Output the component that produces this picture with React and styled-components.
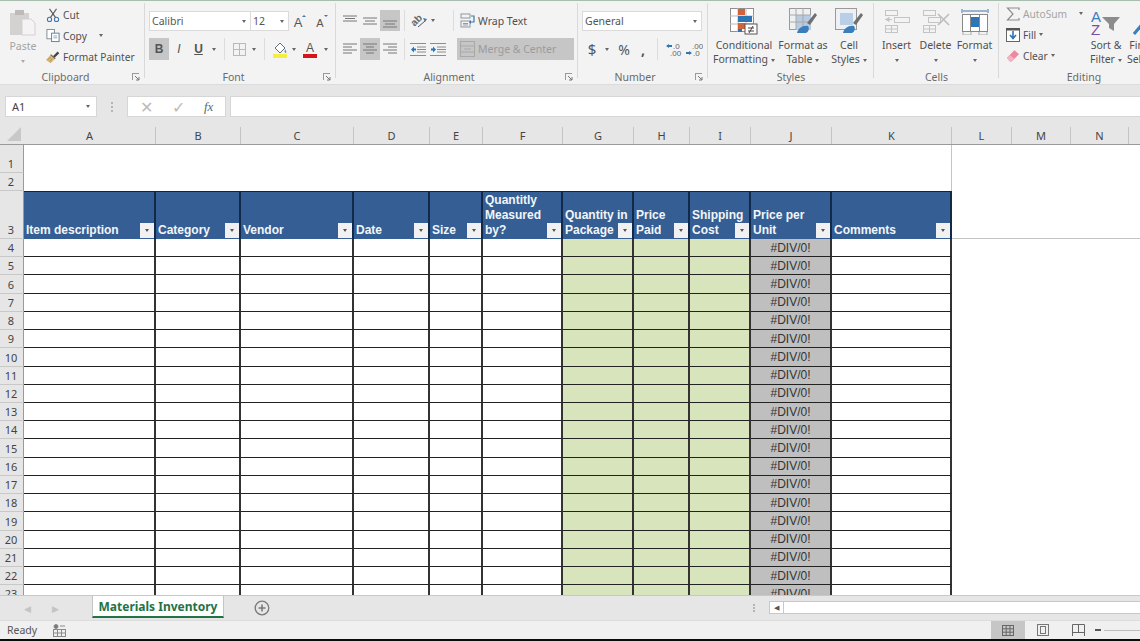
import React from 'react';
import styled, { createGlobalStyle } from 'styled-components';

const GlobalStyle = createGlobalStyle`
    html, body {
        margin: 0;
        padding: 0;
        background: #000;
    }
    * {
        box-sizing: border-box;
    }
`;

const UI_FONT = '"Noto Sans", "Open Sans", sans-serif';
const CELL_FONT = '"Liberation Sans", Arial, sans-serif';
const COLS = '24px 132px 85px 113px 76px 53px 80px 71px 56px 61px 81px 120px 60px 59px 58px 1fr';

const Page = styled.div`
    width: 1140px;
    height: 641px;
    display: flex;
    flex-direction: column;
    overflow: hidden;
    background: #e6e6e6;
    font-family: ${UI_FONT};
    color: #444;
`;

/* ribbon */
const Ribbon = styled.div`
    height: 84px;
    flex: none;
    display: flex;
    padding-top: 2px;
    border-top: 1px solid #a8bcb0;
    background: #f3f3f3;
    font-size: 10.5px;
`;

const Group = styled.div`
    flex: none;
    width: ${p => p.$w}px;
    display: flex;
    flex-direction: column;
    position: relative;
    background: linear-gradient(#d9d9d9, #d9d9d9) right top / 1px 75px no-repeat;
`;

const GroupBody = styled.div`
    height: 67px;
    display: flex;
    flex-direction: ${p => (p.$stack ? 'column' : 'row')};
    gap: ${p => (p.$stack ? 7 : 0)}px;
    padding: ${p => p.$top ?? 0}px 0 0 ${p => p.$left ?? 0}px;
`;

const GroupLabel = styled.div`
    height: 14px;
    line-height: 14px;
    padding-right: ${p => p.$pad ?? 0}px;
    text-align: center;
    color: #6a6a6a;
    font-size: 10.5px;
`;

const Launcher = styled.svg`
    position: absolute;
    right: 5px;
    top: 70px;
    width: 8px;
    height: 8px;
`;

const ToolRow = styled.div`
    display: flex;
    align-items: center;
    flex: none;
    height: ${p => p.$h ?? 22}px;
`;

const Btn = styled.div`
    flex: none;
    width: ${p => p.$w}px;
    height: 100%;
    display: flex;
    align-items: center;
    justify-content: center;
    background: ${p => (p.$on ? '#c6c6c6' : 'transparent')};
`;

const Spacer = styled.div`
    flex: none;
    width: ${p => p.$w}px;
`;

const Sep = styled.div`
    flex: none;
    width: ${p => p.$w}px;
    height: 100%;
    background: linear-gradient(#dcdcdc, #dcdcdc) center / 1px 100% no-repeat;
`;

const Caret = styled.span`
    display: inline-block;
    flex: none;
    width: 0;
    height: 0;
    border-left: 2.5px solid transparent;
    border-right: 2.5px solid transparent;
    border-top: 3px solid ${p => p.$c ?? '#666'};
    margin-left: ${p => p.$ml ?? 0}px;
    vertical-align: middle;
`;

const Combo = styled.div`
    flex: none;
    width: ${p => p.$w}px;
    height: 20px;
    display: flex;
    align-items: center;
    justify-content: space-between;
    padding: 0 4px 0 2px;
    background: #fff;
    border: 1px solid #dadada;
    margin-right: ${p => p.$mr ?? 0}px;
    font-size: 10.5px;
    color: #555;
`;

const BigBtn = styled.div`
    flex: none;
    width: ${p => p.$w}px;
    display: flex;
    flex-direction: column;
    align-items: center;
    padding-top: 5px;
    line-height: 14px;
    text-align: center;
    white-space: nowrap;
    color: ${p => p.$c ?? '#505050'};
`;

const BigIcon = styled.div`
    height: 27px;
    margin-bottom: 3px;
    display: flex;
    align-items: center;
`;

const SmallCol = styled.div`
    flex: none;
    width: ${p => p.$w}px;
    display: flex;
    flex-direction: column;
    font-size: 10.2px;
`;

const SmallRow = styled.div`
    height: 21px;
    display: flex;
    align-items: center;
    gap: 3px;
    white-space: nowrap;
    color: ${p => p.$c ?? '#505050'};
`;

const SmallIcon = styled.div`
    width: 14px;
    flex: none;
    display: flex;
    justify-content: center;
`;

const WrapBtn = styled.div`
    display: flex;
    align-items: center;
    gap: 2px;
    color: #505050;
`;

const MergeBtn = styled.div`
    flex: none;
    width: 117px;
    height: 22px;
    display: flex;
    align-items: center;
    gap: 3px;
    padding-left: 3px;
    background: #c6c6c6;
    color: #9b9b9b;
`;

const NumGlyph = styled.span`
    font-size: ${p => p.$s ?? 14}px;
    font-weight: ${p => p.$b ?? 400};
    color: #555;
`;

const FontMark = styled.span`
    font-family: ${CELL_FONT};
    font-size: 12px;
    color: #555;
    font-weight: ${p => (p.$b ? 700 : 400)};
    font-style: ${p => (p.$i ? 'italic' : 'normal')};
    text-decoration: ${p => (p.$u ? 'underline' : 'none')};
`;

/* formula bar */
const FormulaBar = styled.div`
    height: 36px;
    flex: none;
    display: flex;
    align-items: flex-end;
    padding: 0 0 3px 5px;
    background: #e6e6e6;
    border-top: 1px solid #dcdcdc;
`;

const NameBox = styled.div`
    width: 92px;
    height: 21px;
    display: flex;
    align-items: center;
    justify-content: space-between;
    padding: 0 6px;
    background: #fff;
    border: 1px solid #d6d6d6;
    font-size: 11px;
    color: #444;
`;

const Dots = styled.div`
    width: 30px;
    height: 21px;
    display: flex;
    flex-direction: column;
    align-items: center;
    justify-content: center;
    gap: 2px;
    i {
        width: 2px;
        height: 2px;
        background: #b5b5b5;
    }
`;

const FxBox = styled.div`
    width: 99px;
    height: 21px;
    display: flex;
    align-items: center;
    justify-content: space-around;
    padding: 0 2px;
    margin-right: 4px;
    background: #fff;
    border: 1px solid #d6d6d6;
    color: #bbb;
`;

const FxMark = styled.span`
    font-family: "Liberation Serif", serif;
    font-style: italic;
    font-size: 13px;
    color: #666;
`;

const FormulaInput = styled.div`
    flex: 1;
    height: 21px;
    background: #fff;
    border: 1px solid #d6d6d6;
    border-right: 0;
`;

/* sheet */
const ColHeader = styled.div`
    height: 25px;
    flex: none;
    display: grid;
    grid-template-columns: ${COLS};
    padding-top: 7px;
    background: #e6e6e6;
    border-bottom: 1px solid #9a9a9a;
`;

const Corner = styled.div`
    display: flex;
    justify-content: flex-end;
    padding-right: 3px;
`;

const ColLabel = styled.div`
    display: flex;
    align-items: center;
    justify-content: center;
    height: 17px;
    border-right: 1px solid #c4c4c4;
    font-size: 11px;
    color: #444;
`;

const Sheet = styled.div`
    flex: 1;
    min-height: 0;
    overflow: hidden;
    background: #fff;
`;

const Row = styled.div`
    display: grid;
    grid-template-columns: ${COLS};
    height: ${p => p.$h}px;
`;

const RowLabel = styled.div`
    display: flex;
    align-items: flex-end;
    justify-content: center;
    padding: 0 1px 1px 0;
    background: #e6e6e6;
    border-bottom: 1px solid #c8c8c8;
    border-right: 1px solid #9a9a9a;
    font-size: 11px;
    line-height: 15px;
    color: #444;
`;

const BlankBand = styled.div`
    grid-column: 2 / 13;
    border-right: 1px solid #c4c4c4;
`;

const HeadCell = styled.div`
    position: relative;
    display: flex;
    align-items: flex-end;
    padding: 0 0 1px 2px;
    background: #355f94;
    border-top: 1px solid #12243c;
    border-right: 2px solid #13294a;
    color: #f2f5f9;
    font-family: ${CELL_FONT};
    font-size: 12px;
    font-weight: 700;
    line-height: 15px;
    white-space: pre;
`;

const FilterBtn = styled.div`
    position: absolute;
    right: 0;
    bottom: 1px;
    width: 14px;
    height: 15px;
    display: flex;
    align-items: center;
    justify-content: center;
    background: #f1f1f1;
`;

const HeadTail = styled.div`
    grid-column: 13 / -1;
    border-bottom: 1px solid #c4c4c4;
`;

const DataCell = styled.div`
    display: flex;
    align-items: center;
    justify-content: center;
    background: ${p => p.$bg ?? '#fff'};
    border-right: 2px solid #333;
    border-bottom: 1px solid #222;
    font-family: ${CELL_FONT};
    font-size: 12px;
    color: #333;
`;

/* tabs */
const TabBar = styled.div`
    height: 25px;
    flex: none;
    display: flex;
    background: #e6e6e6;
    border-top: 1px solid #c8c8c8;
`;

const TabNav = styled.div`
    width: 92px;
    display: flex;
    align-items: center;
    gap: 21px;
    padding-left: 24px;
    font-size: 9px;
    color: #c4c4c4;
`;

const Tab = styled.div`
    width: 132px;
    height: 22px;
    display: flex;
    align-items: center;
    justify-content: center;
    background: #fff;
    border-left: 1px solid #c4c4c4;
    border-right: 1px solid #c4c4c4;
    border-bottom: 2px solid #217346;
    color: #217346;
    font-size: 12px;
    font-weight: 700;
`;

const AddTab = styled.div`
    width: 76px;
    display: flex;
    align-items: center;
    justify-content: center;
`;

const TabSpace = styled.div`
    flex: 1;
`;

const Dragger = styled(Dots)`
    width: 15px;
    height: 100%;
    gap: 1px;
`;

const HScroll = styled.div`
    width: 371px;
    height: 13px;
    margin: 5px 0 0 8px;
    display: flex;
    background: #fff;
    border: 1px solid #c8c8c8;
    border-right: 0;
`;

const ScrollArrow = styled.div`
    width: 14px;
    display: flex;
    align-items: center;
    justify-content: center;
    border-right: 1px solid #c8c8c8;
    font-size: 7px;
    color: #555;
`;

/* status bar */
const StatusBar = styled.div`
    height: 19px;
    flex: none;
    display: flex;
    align-items: center;
    background: #f0f0f0;
    border-top: 1px solid #dcdcdc;
    font-size: 10.5px;
    color: #555;
`;

const Ready = styled.div`
    width: 53px;
    padding-left: 7px;
`;

const StatusFill = styled.div`
    flex: 1;
`;

const ViewBtn = styled.div`
    width: ${p => p.$w}px;
    height: 100%;
    display: flex;
    align-items: center;
    justify-content: center;
    background: ${p => (p.$on ? '#c6c6c6' : 'transparent')};
`;

const ZoomMinus = styled.div`
    width: 6px;
    height: 2px;
    background: #555;
    margin-right: 3px;
`;

const ZoomLine = styled.div`
    width: 36px;
    height: 1px;
    background: #bdbdbd;
`;

const BottomEdge = styled.div`
    flex: none;
    height: 2px;
    background: #0b0b0b;
`;

/* icons */
const Lines = ({ rows }) => (
    <svg width="16" height="16" viewBox="0 0 16 16">
        {rows.map(([x1, x2, y], i) => (
            <line key={i} x1={x1} x2={x2} y1={y} y2={y} stroke="#777" strokeWidth="1" />
        ))}
    </svg>
);

const PasteIcon = () => (
    <svg width="28" height="27" viewBox="0 0 28 27">
        <rect x="1" y="4" width="19" height="22" fill="#d4d2d0" />
        <rect x="6" y="1" width="9" height="5" fill="#bdbab8" />
        <path d="M13 10h9l4 4v12H13z" fill="#f6f3f5" stroke="#d8cdd4" />
    </svg>
);

const CutIcon = () => (
    <svg width="16" height="16" viewBox="0 0 16 16" fill="none">
        <path d="M4 1l7 10M12 1L5 11" stroke="#555" strokeWidth="1.2" />
        <circle cx="4" cy="13" r="2.4" stroke="#3f77ad" strokeWidth="1.2" />
        <circle cx="12" cy="13" r="2.4" stroke="#3f77ad" strokeWidth="1.2" />
    </svg>
);

const CopyIcon = () => (
    <svg width="15" height="15" viewBox="0 0 15 15" fill="#fff">
        <rect x="1" y="1" width="8" height="10" stroke="#7e8a96" />
        <rect x="6" y="5" width="8" height="9" stroke="#5b7f9f" />
        <path d="M8 8h4M8 10h4" stroke="#8aa" />
    </svg>
);

const PainterIcon = () => (
    <svg width="18" height="16" viewBox="0 0 18 16" fill="none">
        <path d="M0 12l6-7 6 5-6 6z" fill="#d9b77a" />
        <path d="M2 12l4-4M5 14l3-4" stroke="#a98a50" />
        <path d="M10 8l6-6" stroke="#444" strokeWidth="3" />
        <path d="M6 5l6 5" stroke="#6b5a3b" strokeWidth="1.4" />
    </svg>
);

const BorderIcon = () => (
    <svg width="13" height="13" viewBox="0 0 13 13" fill="none" stroke="#b9b9b9">
        <rect x=".5" y=".5" width="12" height="12" />
        <path d="M6.5 0v13M0 6.5h13" />
    </svg>
);

const FillIcon = () => (
    <svg width="16" height="17" viewBox="0 0 16 17" fill="none">
        <path d="M3 7l5-5 5 5-5 5z" fill="#fff" stroke="#5f6f7d" />
        <path d="M13 8c1 2 2 3 1 4-1 0-2-1-1-4z" fill="#5c8fbd" />
        <rect x="1" y="13" width="14" height="4" fill="#f6ee3c" />
    </svg>
);

const ColorA = () => (
    <svg width="16" height="17" viewBox="0 0 16 17">
        <text x="8" y="11" textAnchor="middle" fontFamily={CELL_FONT} fontSize="12" fill="#555">A</text>
        <rect x="1" y="13" width="14" height="4" fill="#d5141c" />
    </svg>
);

const GrowA = ({ up }) => (
    <svg width="16" height="16" viewBox="0 0 16 16">
        <text x="6" y="14" textAnchor="middle" fontFamily={CELL_FONT} fontSize={up ? 13 : 11} fill="#555">A</text>
        <path d={up ? 'M10 4l2-2 2 2z' : 'M10 2l2 2 2-2z'} fill="#3f77ad" />
    </svg>
);

const OrientIcon = () => (
    <svg width="17" height="16" viewBox="0 0 17 16" fill="none">
        <text x="1" y="11" fontFamily={CELL_FONT} fontSize="10" fontWeight="700" fill="#666" transform="rotate(-45 6 8)">ab</text>
        <path d="M8 14l7-6" stroke="#555" />
        <path d="M13 5l4 1-2 3z" fill="#3f77ad" />
    </svg>
);

const WrapIcon = () => (
    <svg width="16" height="16" viewBox="0 0 16 16" fill="none">
        <rect x="1" y="1" width="9" height="4" stroke="#8a97a3" />
        <rect x="1" y="8" width="9" height="6" stroke="#8a97a3" />
        <path d="M3 10.500h5M3 12h5" stroke="#999" />
        <path d="M11 3h3v6h-4" stroke="#3f77ad" strokeWidth="1.2" />
        <path d="M11 7l-2 2 2 2z" fill="#3f77ad" />
    </svg>
);

const IndentIcon = ({ out }) => (
    <svg width="16" height="13" viewBox="0 0 16 13" fill="none">
        <path d="M0 .5h16M7 4h9M7 6.500h9M7 9h9M0 12.500h16" stroke="#8c8c8c" />
        <path d={out ? 'M1 6.500l3-3v2h2v2H4v2z' : 'M6 6.500l-3-3v2H1v2h2v2z'} fill="#2e75b6" />
    </svg>
);

const MergeIcon = () => (
    <svg width="15" height="16" viewBox="0 0 15 16" fill="none" stroke="#a9a9a9">
        <rect x=".5" y=".5" width="14" height="15" />
        <path d="M1 5h13M1 11h13M4 8h7" />
    </svg>
);

const DecimalIcon = ({ more }) => (
    <svg width="17" height="15" viewBox="0 0 17 15" fontFamily={CELL_FONT} fontSize="8" fill="#666">
        <text x={more ? 7 : 6} y="7">{more ? '.0' : '.00'}</text>
        <text x={more ? 4 : 7} y="14">{more ? '.00' : '.0'}</text>
        <path d={more ? 'M0 4l3-2v1h3v2H3v1z' : 'M6 11l-3-2v1H0v2h3v1z'} fill="#2e75b6" />
    </svg>
);

const CondIcon = () => (
    <svg width="28" height="27" viewBox="0 0 28 27" fill="none">
        <rect x=".5" y=".5" width="23" height="23" fill="#fff" stroke="#8e8e8e" />
        <path d="M8 0v24M16 0v24M0 8h24M0 16h24" stroke="#bbb" />
        <rect x="8" y="1" width="7" height="6" fill="#d0633a" />
        <rect x="8" y="8" width="14" height="6" fill="#2e75b6" />
        <rect x="8" y="15" width="7" height="6" fill="#d0633a" />
        <rect x="8" y="21" width="4" height="3" fill="#2e75b6" />
        <rect x="15" y="16" width="12" height="10" fill="#fff" stroke="#555" />
        <path d="M18 20h6M18 23h6M23 18l-4 7" stroke="#444" />
    </svg>
);

const TableIcon = () => (
    <svg width="28" height="27" viewBox="0 0 28 27" fill="none">
        <rect x=".5" y=".5" width="21" height="21" fill="#eef1f4" stroke="#9a9a9a" />
        <rect x="7" y="7" width="15" height="15" fill="#b8cbe0" />
        <path d="M7 0v22M14 0v22M0 7h22M0 14h22" stroke="#a8a8a8" />
        <path d="M18 15l8-10 2 2-7 10z" fill="#6f6f6f" />
        <path d="M8 25c1-5 6-8 11-7 2 3 0 6-2 7z" fill="#3a7ebc" />
    </svg>
);

const StyleIcon = () => (
    <svg width="28" height="27" viewBox="0 0 28 27" fill="none">
        <rect x=".5" y=".5" width="21" height="21" fill="#eef1f4" stroke="#9a9a9a" />
        <rect x="5" y="5" width="13" height="12" fill="#b8cfe6" />
        <path d="M18 15l8-10 2 2-7 10z" fill="#6f6f6f" />
        <path d="M8 25c1-5 6-8 11-7 2 3 0 6-2 7z" fill="#3a7ebc" />
    </svg>
);

const InsertIcon = () => (
    <svg width="26" height="24" viewBox="0 0 26 24" fill="none" stroke="#c4c4c4">
        <rect x="1.500" y=".5" width="12" height="5" />
        <rect x="10.500" y="7.500" width="15" height="5" />
        <rect x="1.500" y="15.500" width="12" height="7" />
        <path d="M7.500 15v8M1 19h13M1 9.500h7" />
        <path d="M2 9.500l3-2v4z" fill="#b9c6d3" />
    </svg>
);

const DeleteIcon = () => (
    <svg width="28" height="24" viewBox="0 0 28 24" fill="none" stroke="#c4c4c4">
        <rect x="1.500" y=".5" width="12" height="5" />
        <rect x="6.500" y="7.500" width="12" height="5" />
        <rect x="1.500" y="15.500" width="12" height="7" />
        <path d="M7.500 15v8M1 19h13" />
        <path d="M16 4l11 11M27 4L16 15" stroke="#bdbdbd" strokeWidth="1.6" />
    </svg>
);

const FormatIcon = () => (
    <svg width="28" height="27" viewBox="0 0 28 27" fill="none">
        <path d="M1 1v4M27 1v4M2 3h24" stroke="#3f77ad" />
        <rect x="1.500" y="6.500" width="25" height="17" fill="#fff" stroke="#888" />
        <path d="M9.500 6v18M18.500 6v18" stroke="#888" />
        <rect x="10" y="9" width="8" height="10" fill="#2e75b6" />
        <path d="M2 24v3h8v-3M18 24v3h8v-3" stroke="#aaa" />
    </svg>
);

const SigmaIcon = () => (
    <svg width="14" height="14" viewBox="0 0 14 14" fill="none">
        <path d="M13 3V1H1.500l5.500 6-5.500 6H13v-2" stroke="#8e8e8e" strokeWidth="1.200" />
    </svg>
);

const FillDown = () => (
    <svg width="14" height="14" viewBox="0 0 14 14" fill="none">
        <rect x=".5" y=".5" width="13" height="13" fill="#fff" stroke="#666" />
        <rect x="0" y="0" width="14" height="2.500" fill="#555" />
        <path d="M7 3v7M4 7l3 3.500L10 7" stroke="#2e75b6" strokeWidth="1.600" />
    </svg>
);

const EraserIcon = () => (
    <svg width="15" height="13" viewBox="0 0 15 13">
        <path d="M1 9l8-8 5 4-8 8H4z" fill="#ea8aa0" />
        <path d="M1 9l3-3 5 4-3 3H4z" fill="#f2b4c3" />
    </svg>
);

const SortIcon = () => (
    <svg width="30" height="27" viewBox="0 0 30 27">
        <text x="0" y="14" fontFamily={CELL_FONT} fontSize="15" fill="#3a7ebc">A</text>
        <text x="0" y="27" fontFamily={CELL_FONT} fontSize="15" fill="#7a4fa3">Z</text>
        <path d="M11 9h18l-6 7v7l-5-3v-4z" fill="#8c8c8c" />
    </svg>
);

const FindIcon = () => (
    <svg width="24" height="27" viewBox="0 0 24 27" fill="none">
        <path d="M1 26l10-12" stroke="#3a7ebc" strokeWidth="3" />
        <circle cx="15" cy="9" r="6" stroke="#8c8c8c" strokeWidth="2" />
    </svg>
);

const LauncherIcon = () => (
    <Launcher viewBox="0 0 8 8" fill="none">
        <path d="M0 .5h7M.5 0v7" stroke="#9a9a9a" />
        <path d="M3 3l4 4M7 4v3H4" stroke="#777" />
    </Launcher>
);

const CornerIcon = () => (
    <svg width="14" height="15" viewBox="0 0 14 15">
        <path d="M14 0v14H0z" fill="#c8c8c8" />
    </svg>
);

const PlusCircle = () => (
    <svg width="16" height="16" viewBox="0 0 16 16" fill="none" stroke="#7a7a7a" strokeWidth="1.300">
        <circle cx="8" cy="8" r="6.800" />
        <path d="M8 4.500v7M4.500 8h7" strokeWidth="1.600" />
    </svg>
);

const MacroIcon = () => (
    <svg width="13" height="13" viewBox="0 0 13 13" fill="none" stroke="#8a8a8a">
        <circle cx="3" cy="2.500" r="2" fill="#777" />
        <rect x=".5" y="5.500" width="12" height="7" />
        <path d="M4.500 5v8M8.500 5v8M0 9h13M7 2h5" />
    </svg>
);

const GridView = () => (
    <svg width="12" height="11" viewBox="0 0 12 11" fill="none" stroke="#666">
        <rect x=".5" y=".5" width="11" height="10" />
        <path d="M4.200 0v11M8 0v11M0 3.800h12M0 7.200h12" />
    </svg>
);

const PageView = () => (
    <svg width="12" height="12" viewBox="0 0 12 12" fill="none" stroke="#777">
        <rect x=".5" y=".5" width="11" height="11" />
        <rect x="3.500" y="2.500" width="5" height="7" />
    </svg>
);

const BreakView = () => (
    <svg width="13" height="12" viewBox="0 0 13 12" fill="none" stroke="#666">
        <path d="M.5 12V.5h12V12M.5 8.500h12M6.500 1v7.500" />
    </svg>
);

const ALIGN_TOP = [[1, 15, 3], [3, 13, 5.5], [1, 15, 8]];
const ALIGN_MID = [[1, 15, 5], [3, 13, 8], [1, 15, 11]];
const ALIGN_BOT = [[1, 15, 8], [3, 13, 11], [1, 15, 14]];
const ALIGN_L = [[1, 15, 3], [1, 10, 6], [1, 15, 9], [1, 10, 12]];
const ALIGN_C = [[1, 15, 3], [4, 12, 6], [1, 15, 9], [4, 12, 12]];
const ALIGN_R = [[1, 15, 3], [6, 15, 6], [1, 15, 9], [6, 15, 12]];

const Filter = () => (
    <FilterBtn>
        <Caret $c="#555" />
    </FilterBtn>
);

const HEADERS = [
    'Item description',
    'Category',
    'Vendor',
    'Date',
    'Size',
    'Quantitly\nMeasured\nby?',
    'Quantity in\nPackage',
    'Price\nPaid',
    'Shipping\nCost',
    'Price per\nUnit',
    'Comments',
];

const COL_LETTERS = ['A', 'B', 'C', 'D', 'E', 'F', 'G', 'H', 'I', 'J', 'K', 'L', 'M', 'N'];
const DATA_ROWS = Array.from({ length: 20 }, (_, i) => i + 4);

const cellBackground = col => {
    if (col >= 6 && col <= 8) return '#d8e4bc';
    if (col === 9) return '#bfbfbf';
    return '#fff';
};

const ClipboardGroup = () => (
    <Group $w={145}>
        <GroupBody $top={1}>
            <BigBtn $w={46} $c="#a3a3a3">
                <BigIcon><PasteIcon /></BigIcon>
                Paste
                <div><Caret $c="#aaa" /></div>
            </BigBtn>
            <SmallCol $w={96}>
                <SmallRow><SmallIcon><CutIcon /></SmallIcon>Cut</SmallRow>
                <SmallRow><SmallIcon><CopyIcon /></SmallIcon>Copy<Caret $ml={9} /></SmallRow>
                <SmallRow><SmallIcon><PainterIcon /></SmallIcon>Format Painter</SmallRow>
            </SmallCol>
        </GroupBody>
        <GroupLabel $pad={14}>Clipboard</GroupLabel>
        <LauncherIcon />
    </Group>
);

const FontGroup = () => (
    <Group $w={191}>
        <GroupBody $stack $top={8} $left={4}>
            <ToolRow $h={20}>
                <Combo $w={102} $mr={-1}>Calibri<Caret /></Combo>
                <Combo $w={39}>12<Caret /></Combo>
                <Btn $w={22}><GrowA up /></Btn>
                <Btn $w={22}><GrowA /></Btn>
            </ToolRow>
            <ToolRow>
                <Btn $w={20} $on><FontMark $b>B</FontMark></Btn>
                <Btn $w={20}><FontMark $i>I</FontMark></Btn>
                <Btn $w={19}><FontMark $u $b>U</FontMark></Btn>
                <Btn $w={12}><Caret /></Btn>
                <Sep $w={8} />
                <Btn $w={22}><BorderIcon /></Btn>
                <Btn $w={8}><Caret /></Btn>
                <Sep $w={12} />
                <Btn $w={20}><FillIcon /></Btn>
                <Btn $w={8}><Caret /></Btn>
                <Btn $w={24}><ColorA /></Btn>
                <Btn $w={8}><Caret /></Btn>
            </ToolRow>
        </GroupBody>
        <GroupLabel $pad={14}>Font</GroupLabel>
        <LauncherIcon />
    </Group>
);

const AlignmentGroup = () => (
    <Group $w={242}>
        <GroupBody $stack $top={7} $left={4}>
            <ToolRow $h={21}>
                <Btn $w={20}><Lines rows={ALIGN_TOP} /></Btn>
                <Btn $w={20}><Lines rows={ALIGN_MID} /></Btn>
                <Btn $w={20} $on><Lines rows={ALIGN_BOT} /></Btn>
                <Sep $w={8} />
                <Btn $w={20}><OrientIcon /></Btn>
                <Btn $w={10}><Caret /></Btn>
                <Spacer $w={8} />
                <Sep $w={14} />
                <WrapBtn><WrapIcon />Wrap Text</WrapBtn>
            </ToolRow>
            <ToolRow>
                <Btn $w={20}><Lines rows={ALIGN_L} /></Btn>
                <Btn $w={20} $on><Lines rows={ALIGN_C} /></Btn>
                <Btn $w={20}><Lines rows={ALIGN_R} /></Btn>
                <Sep $w={8} />
                <Btn $w={20}><IndentIcon out /></Btn>
                <Btn $w={20}><IndentIcon /></Btn>
                <Spacer $w={9} />
                <MergeBtn><MergeIcon />Merge &amp; Center</MergeBtn>
            </ToolRow>
        </GroupBody>
        <GroupLabel $pad={16}>Alignment</GroupLabel>
        <LauncherIcon />
    </Group>
);

const NumberGroup = () => (
    <Group $w={130}>
        <GroupBody $stack $top={8} $left={4}>
            <ToolRow $h={20}>
                <Combo $w={120}>General<Caret /></Combo>
            </ToolRow>
            <ToolRow>
                <Btn $w={20}><NumGlyph $s={15}>$</NumGlyph></Btn>
                <Btn $w={10}><Caret /></Btn>
                <Btn $w={24}><NumGlyph $s={14}>%</NumGlyph></Btn>
                <Btn $w={14}><NumGlyph $s={14} $b={700}>,</NumGlyph></Btn>
                <Sep $w={14} />
                <Btn $w={20}><DecimalIcon more /></Btn>
                <Btn $w={20}><DecimalIcon /></Btn>
            </ToolRow>
        </GroupBody>
        <GroupLabel $pad={16}>Number</GroupLabel>
        <LauncherIcon />
    </Group>
);

const StylesGroup = () => (
    <Group $w={166}>
        <GroupBody $left={6}>
            <BigBtn $w={60}>
                <BigIcon><CondIcon /></BigIcon>
                Conditional
                <div>Formatting<Caret $ml={3} /></div>
            </BigBtn>
            <BigBtn $w={58}>
                <BigIcon><TableIcon /></BigIcon>
                Format as
                <div>Table<Caret $ml={3} /></div>
            </BigBtn>
            <BigBtn $w={34}>
                <BigIcon><StyleIcon /></BigIcon>
                Cell
                <div>Styles<Caret $ml={3} /></div>
            </BigBtn>
        </GroupBody>
        <GroupLabel>Styles</GroupLabel>
    </Group>
);

const CellsGroup = () => (
    <Group $w={125}>
        <GroupBody $left={3}>
            <BigBtn $w={39}>
                <BigIcon><InsertIcon /></BigIcon>
                Insert
                <div><Caret /></div>
            </BigBtn>
            <BigBtn $w={39}>
                <BigIcon><DeleteIcon /></BigIcon>
                Delete
                <div><Caret /></div>
            </BigBtn>
            <BigBtn $w={39}>
                <BigIcon><FormatIcon /></BigIcon>
                Format
                <div><Caret /></div>
            </BigBtn>
        </GroupBody>
        <GroupLabel>Cells</GroupLabel>
    </Group>
);

const EditingGroup = () => (
    <Group $w={170}>
        <GroupBody $top={0} $left={7}>
            <SmallCol $w={80}>
                <SmallRow $c="#a3a3a3"><SmallIcon><SigmaIcon /></SmallIcon>AutoSum<Caret $ml={9} /></SmallRow>
                <SmallRow><SmallIcon><FillDown /></SmallIcon>Fill<Caret $ml={0} /></SmallRow>
                <SmallRow><SmallIcon><EraserIcon /></SmallIcon>Clear<Caret $ml={0} /></SmallRow>
            </SmallCol>
            <BigBtn $w={40}>
                <BigIcon><SortIcon /></BigIcon>
                Sort &amp;
                <div>Filter<Caret $ml={3} /></div>
            </BigBtn>
            <BigBtn $w={38}>
                <BigIcon><FindIcon /></BigIcon>
                Find &amp;
                <div>Select<Caret $ml={3} /></div>
            </BigBtn>
        </GroupBody>
        <GroupLabel>Editing</GroupLabel>
    </Group>
);

const App = () => (
    <Page>
        <GlobalStyle />
        <Ribbon>
            <ClipboardGroup />
            <FontGroup />
            <AlignmentGroup />
            <NumberGroup />
            <StylesGroup />
            <CellsGroup />
            <EditingGroup />
        </Ribbon>

        <FormulaBar>
            <NameBox>A1<Caret /></NameBox>
            <Dots><i /><i /><i /></Dots>
            <FxBox>
                <span>✕</span>
                <span>✓</span>
                <FxMark>fx</FxMark>
            </FxBox>
            <FormulaInput />
        </FormulaBar>

        <ColHeader>
            <Corner><CornerIcon /></Corner>
            {COL_LETTERS.map(c => <ColLabel key={c}>{c}</ColLabel>)}
        </ColHeader>

        <Sheet>
            <Row $h={28}>
                <RowLabel>1</RowLabel>
                <BlankBand />
            </Row>
            <Row $h={18}>
                <RowLabel>2</RowLabel>
                <BlankBand />
            </Row>
            <Row $h={48}>
                <RowLabel>3</RowLabel>
                {HEADERS.map(h => (
                    <HeadCell key={h}>
                        {h}
                        <Filter />
                    </HeadCell>
                ))}
                <HeadTail />
            </Row>
            {DATA_ROWS.map(n => (
                <Row key={n} $h={18.22}>
                    <RowLabel>{n}</RowLabel>
                    {HEADERS.map((h, col) => (
                        <DataCell key={h} $bg={cellBackground(col)}>
                            {col === 9 ? '#DIV/0!' : ''}
                        </DataCell>
                    ))}
                </Row>
            ))}
        </Sheet>

        <TabBar>
            <TabNav>
                <span>◀</span>
                <span>▶</span>
            </TabNav>
            <Tab>Materials Inventory</Tab>
            <AddTab><PlusCircle /></AddTab>
            <TabSpace />
            <Dragger><i /><i /><i /></Dragger>
            <HScroll>
                <ScrollArrow>◀</ScrollArrow>
            </HScroll>
        </TabBar>

        <StatusBar>
            <Ready>Ready</Ready>
            <MacroIcon />
            <StatusFill />
            <ViewBtn $w={34} $on><GridView /></ViewBtn>
            <ViewBtn $w={36}><PageView /></ViewBtn>
            <ViewBtn $w={34}><BreakView /></ViewBtn>
            <ZoomMinus />
            <ZoomLine />
        </StatusBar>
        <BottomEdge />
    </Page>
);

export default App;
